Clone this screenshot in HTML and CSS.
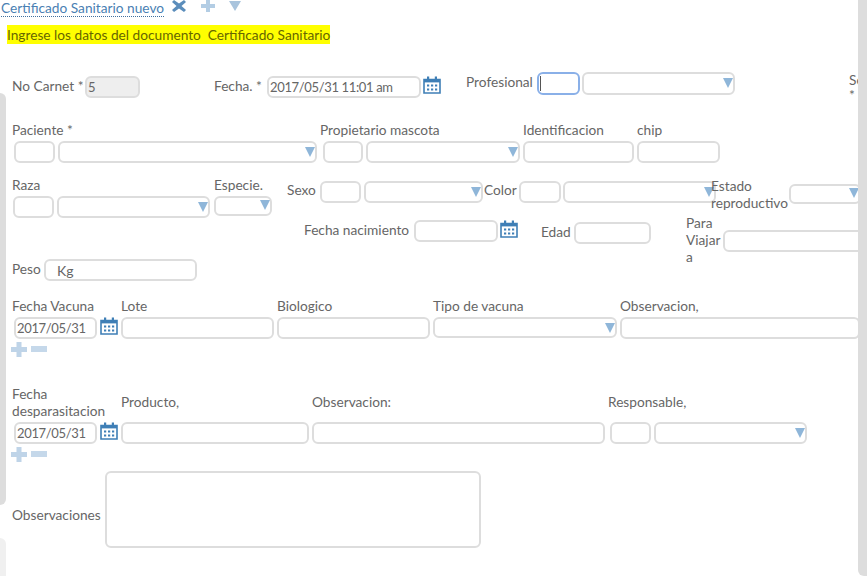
FILE: index.html
```html
<!DOCTYPE html>
<html lang="en">
<head>
    <meta charset="UTF-8">
    <title>Certificado Sanitario nuevo</title>
    <link rel="stylesheet" href="styles.css">
</head>
<body>
    <div class="strip-left"></div>
    <div class="strip-left-low"></div>
    <div class="main">
        <div class="title-bar">
            <span class="title">Certificado Sanitario nuevo</span>
            <svg class="ico-close" width="14" height="12" viewBox="0 0 14 12"><path d="M2 0 L7 3.6 L12 0 L14 2 L9.5 6 L14 10 L12 12 L7 8.4 L2 12 L0 10 L4.5 6 L0 2 Z" fill="#5b8dbb"/></svg>
            <svg class="ico-plus" width="14" height="12" viewBox="0 0 14 12"><path d="M5 0 H9 V4 H14 V8 H9 V12 H5 V8 H0 V4 H5 Z" fill="#b3cde4"/></svg>
            <svg class="ico-down" width="12" height="10" viewBox="0 0 12 10"><path d="M0 0 H12 L6 10 Z" fill="#a9c4dd"/></svg>
        </div>
        <div class="notice"><mark>Ingrese los datos del documento&nbsp; Certificado Sanitario</mark></div>

        <!-- datos generales -->
        <div class="row row-head">
            <label class="lbl lbl-carnet">No Carnet *</label>
            <input class="inp inp-carnet" value="5" readonly>
            <label class="lbl lbl-fecha">Fecha. *</label>
            <input class="inp inp-fecha" value="2017/05/31 11:01 am">
            <svg class="cal cal-head" viewBox="0 0 18 18"><use href="#cal"/></svg>
            <label class="lbl lbl-prof">Profesional</label>
            <input class="inp inp-focus">
            <div class="sel sel-prof"></div>
            <label class="lbl lbl-se">Sexo<br>*</label>
        </div>

        <div class="row row-paciente">
            <div class="field">
                <label class="lbl">Paciente *</label>
                <div class="inputs ind2">
                    <input class="inp w41">
                    <div class="sel w259"></div>
                </div>
            </div>
            <div class="field">
                <label class="lbl">Propietario mascota</label>
                <div class="inputs ind3">
                    <input class="inp w40">
                    <div class="sel w154"></div>
                </div>
            </div>
            <div class="field">
                <label class="lbl">Identificacion</label>
                <div class="inputs"><input class="inp w111"></div>
            </div>
            <div class="field">
                <label class="lbl">chip</label>
                <div class="inputs"><input class="inp w83"></div>
            </div>
        </div>

        <div class="row row-raza">
            <div class="field">
                <label class="lbl">Raza</label>
                <div class="inputs ind1">
                    <input class="inp w41">
                    <div class="sel w153"></div>
                </div>
            </div>
            <div class="field field-especie">
                <label class="lbl">Especie.</label>
                <div class="inputs"><div class="sel sel-short w58"></div></div>
            </div>
            <label class="lbl lbl-sexo">Sexo</label>
            <input class="inp w41 top5">
            <div class="sel sel-sexo top5"></div>
            <label class="lbl lbl-color">Color</label>
            <input class="inp w42 top5">
            <div class="sel sel-color top5"></div>
            <label class="lbl lbl-estado">Estado reproductivo</label>
            <div class="sel sel-short sel-estado"></div>
        </div>

        <div class="row row-nacimiento">
            <label class="lbl lbl-nac">Fecha nacimiento</label>
            <input class="inp inp-nac">
            <svg class="cal cal-nac" viewBox="0 0 18 18"><use href="#cal"/></svg>
            <label class="lbl lbl-edad">Edad</label>
            <input class="inp inp-edad">
            <label class="lbl lbl-viajar">Para Viajar a</label>
            <input class="inp inp-viajar">
        </div>

        <div class="row row-peso">
            <label class="lbl lbl-peso">Peso</label>
            <input class="inp inp-peso" value="Kg">
        </div>

        <!-- vacunas -->
        <div class="row row-vacuna">
            <div class="field">
                <label class="lbl">Fecha Vacuna</label>
                <div class="inputs ind2">
                    <input class="inp w83" value="2017/05/31">
                    <svg class="cal" viewBox="0 0 18 18"><use href="#cal"/></svg>
                </div>
            </div>
            <div class="field">
                <label class="lbl">Lote</label>
                <div class="inputs"><input class="inp w153"></div>
            </div>
            <div class="field">
                <label class="lbl">Biologico</label>
                <div class="inputs"><input class="inp w153"></div>
            </div>
            <div class="field">
                <label class="lbl">Tipo de vacuna</label>
                <div class="inputs"><div class="sel sel-tipo w184"></div></div>
            </div>
            <div class="field">
                <label class="lbl">Observacion,</label>
                <div class="inputs"><input class="inp w240"></div>
            </div>
        </div>
        <div class="add-remove">
            <svg width="16" height="15" viewBox="0 0 16 15"><path d="M5.5 0 H10.5 V5 H16 V10 H10.5 V15 H5.5 V10 H0 V5 H5.5 Z" fill="#bfd4e8"/></svg>
            <svg width="16" height="15" viewBox="0 0 16 15"><rect y="4" width="16" height="6" fill="#c5d8ea"/></svg>
        </div>

        <!-- desparasitacion -->
        <div class="row row-desp">
            <div class="field">
                <label class="lbl lbl-desp">Fecha desparasitacion</label>
                <div class="inputs ind2">
                    <input class="inp w83" value="2017/05/31">
                    <svg class="cal" viewBox="0 0 18 18"><use href="#cal"/></svg>
                </div>
            </div>
            <div class="field">
                <label class="lbl lbl-low">Producto,</label>
                <div class="inputs"><input class="inp w188"></div>
            </div>
            <div class="field">
                <label class="lbl lbl-low">Observacion:</label>
                <div class="inputs"><input class="inp w293"></div>
            </div>
            <div class="field">
                <label class="lbl lbl-low">Responsable,</label>
                <div class="inputs ind2">
                    <input class="inp w41">
                    <div class="sel w153"></div>
                </div>
            </div>
        </div>
        <div class="add-remove">
            <svg width="16" height="15" viewBox="0 0 16 15"><path d="M5.5 0 H10.5 V5 H16 V10 H10.5 V15 H5.5 V10 H0 V5 H5.5 Z" fill="#bfd4e8"/></svg>
            <svg width="16" height="15" viewBox="0 0 16 15"><rect y="4" width="16" height="6" fill="#c5d8ea"/></svg>
        </div>

        <div class="row row-obs">
            <label class="lbl lbl-obs">Observaciones</label>
            <textarea class="inp obs-area"></textarea>
        </div>
    </div>
    <div class="scrollbar"></div>

    <svg class="defs" width="0" height="0">
        <symbol id="cal" viewBox="0 0 18 18">
            <path d="M1 3.5 H17 V17 H1 Z" fill="#fff" stroke="#3f7fb6" stroke-width="1.6"/>
            <rect x="1" y="3" width="16" height="3.4" fill="#3f7fb6"/>
            <rect x="4" y="0.5" width="2.2" height="4" fill="#3f7fb6"/>
            <rect x="11.8" y="0.5" width="2.2" height="4" fill="#3f7fb6"/>
            <g fill="#3f7fb6">
                <rect x="4" y="8.5" width="2.2" height="2"/><rect x="8" y="8.5" width="2.2" height="2"/><rect x="12" y="8.5" width="2.2" height="2"/>
                <rect x="4" y="12.5" width="2.2" height="2"/><rect x="8" y="12.5" width="2.2" height="2"/><rect x="12" y="12.5" width="2.2" height="2"/>
            </g>
        </symbol>
    </svg>
</body>
</html>
```

FILE: styles.css
```css
html, body {
    margin: 0;
    height: 576px;
    overflow: hidden;
    background: #fff;
}
body {
    display: flex;
    position: relative;
    font-family: "Lato", "Open Sans", sans-serif;
    font-size: 13.7px;
    line-height: 17px;
    color: #666;
}
.main {
    width: 858px;
    overflow: hidden;
    flex-shrink: 0;
}
.scrollbar {
    width: 9px;
    background: #ddd;
    border-bottom-left-radius: 6px;
}
.strip-left {
    position: absolute;
    left: 0;
    top: 93px;
    width: 6px;
    height: 412px;
    background: #ddd;
    border-radius: 0 6px 6px 0;
}
.strip-left-low {
    position: absolute;
    left: 0;
    top: 538px;
    width: 6px;
    height: 38px;
    background: #f0f0f0;
    border-radius: 0 6px 0 0;
}
.defs {
    position: absolute;
}

/* cabecera */
.title-bar {
    display: flex;
    height: 25px;
    padding-left: 1px;
}
.title {
    height: 16px;
    line-height: 15px;
    color: #4a7fb3;
    border-bottom: 1px dotted #3f6f9e;
    white-space: nowrap;
}
.ico-close {
    margin-left: 8px;
}
.ico-plus {
    margin-left: 15px;
    margin-top: 0;
}
.ico-down {
    margin-left: 14px;
    margin-top: 1px;
}
.notice {
    height: 20px;
    padding-left: 7px;
    line-height: 19px;
}
.notice mark {
    display: inline-block;
    background: #ffff00;
    color: #666600;
}

/* filas */
.row {
    display: flex;
    align-items: flex-start;
    gap: 3px;
    padding-left: 12px;
    white-space: nowrap;
}
.row-head { height: 49px; margin-top: 27px; gap: 0; }
.row-paciente { height: 55px; }
.row-raza { height: 38px; gap: 0; }
.row-nacimiento { height: 44px; gap: 0; padding-left: 304px; }
.row-peso { height: 39px; gap: 0; }
.row-vacuna { height: 43px; }
.row-desp { height: 59px; margin-top: 29px; }
.row-obs { margin-top: 9px; gap: 0; }

.field {
    display: flex;
    flex-direction: column;
    flex-shrink: 0;
}
.inputs {
    display: flex;
    align-items: flex-start;
    gap: 3px;
    margin-top: 3px;
}
.ind1 { margin-left: 1px; }
.ind2 { margin-left: 2px; }
.ind3 { margin-left: 3px; }

.lbl {
    display: block;
    flex-shrink: 0;
}

/* controles */
.inp, .sel {
    display: block;
    box-sizing: border-box;
    height: 22px;
    flex-shrink: 0;
    margin: 0;
    padding: 0 1px;
    border: 2px solid #ddd;
    border-radius: 6px;
    background: #fff;
    font: inherit;
    font-size: 13px;
    letter-spacing: -0.35px;
    color: #666;
    outline: none;
}
.sel {
    position: relative;
}
.sel::after {
    content: "";
    position: absolute;
    right: 0;
    top: 4px;
    border-left: 5px solid transparent;
    border-right: 5px solid transparent;
    border-top: 10px solid #8fb6d9;
}
.sel-short { height: 20px; }
.sel-short::after { top: 2px; }

.w40 { width: 40px; }
.w41 { width: 41px; }
.w42 { width: 42px; }
.w58 { width: 58px; }
.w83 { width: 83px; }
.w111 { width: 111px; }
.w153 { width: 153px; }
.w154 { width: 154px; }
.w184 { width: 184px; height: 21px; }
.w188 { width: 188px; }
.w240 { width: 240px; }
.w259 { width: 259px; }
.w293 { width: 293px; }
.top5 { margin-top: 5px; }

.cal {
    display: block;
    width: 18px;
    height: 18px;
    flex-shrink: 0;
}

/* fila 1 */
.lbl-carnet { width: 73px; margin-top: 5px; }
.inp-carnet { width: 55px; margin-top: 4px; background: #eee; }
.lbl-fecha { width: 53px; margin-left: 74px; margin-top: 5px; }
.inp-fecha { width: 154px; margin-top: 4px; }
.cal-head { margin-left: 2px; margin-top: 4px; }
.lbl-prof { width: 71px; margin-left: 25px; margin-top: 1px; }
.inp-focus {
    width: 43px;
    height: 23px;
    border-color: #8ab0e8;
    background: linear-gradient(#555, #555) 1px 2px / 1px 15px no-repeat #fff;
}
.sel-prof { width: 153px; height: 23px; margin-left: 2px; }
.lbl-se { margin-left: 114px; margin-top: 0; line-height: 15px; }

/* fila 3 */
.field-especie { margin-left: 4px; }
.lbl-sexo { width: 33px; margin-left: 15px; margin-top: 5px; }
.sel-sexo { width: 119px; margin-left: 3px; }
.lbl-color { width: 35px; margin-top: 5px; margin-left: 1px; }
.sel-color { width: 153px; margin-left: 2px; }
.lbl-estado { position: relative; width: 78px; margin-left: -5px; margin-top: 1px; white-space: normal; }
.sel-estado { width: 72px; margin-top: 8px; }

/* fila 4 */
.lbl-nac { width: 110px; margin-top: 7px; }
.inp-nac { width: 84px; margin-top: 6px; }
.cal-nac { margin-left: 2px; margin-top: 6px; }
.lbl-edad { width: 33px; margin-left: 23px; margin-top: 9px; }
.inp-edad { width: 77px; margin-top: 8px; }
.lbl-viajar { width: 37px; margin-left: 35px; white-space: normal; }
.inp-viajar { width: 160px; margin-top: 16px; }

.lbl-peso { width: 32px; margin-top: 2px; }
.inp-peso { width: 153px; padding-left: 11px; margin-top: 1px; font-size: 14px; letter-spacing: 0; }

.add-remove {
    display: flex;
    gap: 4px;
    height: 15px;
    margin-top: 2px;
    padding-left: 11px;
}
.lbl-desp { width: 100px; margin-top: -1px; margin-bottom: 1px; white-space: normal; }
.row-desp .inputs { margin-top: 2px; }
.lbl-low { margin-top: 7px; margin-bottom: 10px; }

.lbl-obs { width: 93px; margin-top: 35px; }
.obs-area {
    width: 376px;
    height: 77px;
    resize: none;
}
```
